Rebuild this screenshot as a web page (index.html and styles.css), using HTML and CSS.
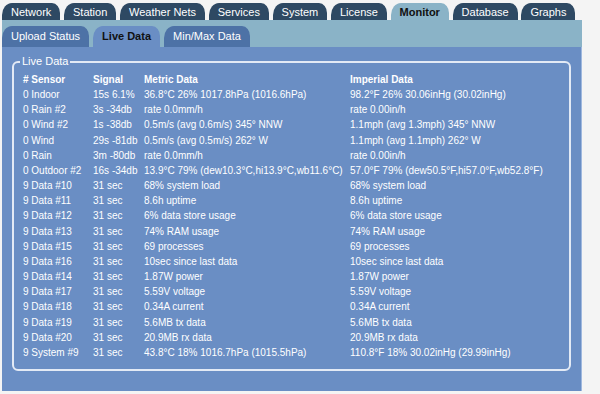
FILE: index.html
```html
<!DOCTYPE html>
<html lang="en">
<head>
  <meta charset="UTF-8">
  <title>Monitor - Live Data</title>
  <link rel="stylesheet" href="styles.css">
</head>
<body>

  <div class="page">
    <!-- Main navigation -->
    <ul class="tabs main-tabs">
      <li>Network</li>
      <li>Station</li>
      <li>Weather Nets</li>
      <li>Services</li>
      <li>System</li>
      <li>License</li>
      <li class="active">Monitor</li>
      <li>Database</li>
      <li>Graphs</li>
    </ul>

    <!-- Sub navigation -->
    <div class="subbar">
      <ul class="tabs sub-tabs">
        <li>Upload Status</li>
        <li class="active">Live Data</li>
        <li>Min/Max Data</li>
      </ul>
    </div>

    <div class="panel">
      <fieldset class="live">
        <legend>Live Data</legend>
        <table class="sensors">
          <colgroup>
            <col class="c-sensor">
            <col class="c-signal">
            <col class="c-metric">
            <col>
          </colgroup>
          <thead>
            <tr><th># Sensor</th><th>Signal</th><th>Metric Data</th><th>Imperial Data</th></tr>
          </thead>
          <tbody>
            <tr><td>0 Indoor</td><td>15s 6.1%</td><td>36.8°C 26% 1017.8hPa (1016.6hPa)</td><td>98.2°F 26% 30.06inHg (30.02inHg)</td></tr>
            <tr><td>0 Rain #2</td><td>3s -34db</td><td>rate 0.0mm/h</td><td>rate 0.00in/h</td></tr>
            <tr><td>0 Wind #2</td><td>1s -38db</td><td>0.5m/s (avg 0.6m/s) 345° NNW</td><td>1.1mph (avg 1.3mph) 345° NNW</td></tr>
            <tr><td>0 Wind</td><td>29s -81db</td><td>0.5m/s (avg 0.5m/s) 262° W</td><td>1.1mph (avg 1.1mph) 262° W</td></tr>
            <tr><td>0 Rain</td><td>3m -80db</td><td>rate 0.0mm/h</td><td>rate 0.00in/h</td></tr>
            <tr><td>0 Outdoor #2</td><td>16s -34db</td><td>13.9°C 79% (dew10.3°C,hi13.9°C,wb11.6°C)</td><td>57.0°F 79% (dew50.5°F,hi57.0°F,wb52.8°F)</td></tr>
            <tr><td>9 Data #10</td><td>31 sec</td><td>68% system load</td><td>68% system load</td></tr>
            <tr><td>9 Data #11</td><td>31 sec</td><td>8.6h uptime</td><td>8.6h uptime</td></tr>
            <tr><td>9 Data #12</td><td>31 sec</td><td>6% data store usage</td><td>6% data store usage</td></tr>
            <tr><td>9 Data #13</td><td>31 sec</td><td>74% RAM usage</td><td>74% RAM usage</td></tr>
            <tr><td>9 Data #15</td><td>31 sec</td><td>69 processes</td><td>69 processes</td></tr>
            <tr><td>9 Data #16</td><td>31 sec</td><td>10sec since last data</td><td>10sec since last data</td></tr>
            <tr><td>9 Data #14</td><td>31 sec</td><td>1.87W power</td><td>1.87W power</td></tr>
            <tr><td>9 Data #17</td><td>31 sec</td><td>5.59V voltage</td><td>5.59V voltage</td></tr>
            <tr><td>9 Data #18</td><td>31 sec</td><td>0.34A current</td><td>0.34A current</td></tr>
            <tr><td>9 Data #19</td><td>31 sec</td><td>5.6MB tx data</td><td>5.6MB tx data</td></tr>
            <tr><td>9 Data #20</td><td>31 sec</td><td>20.9MB rx data</td><td>20.9MB rx data</td></tr>
            <tr><td>9 System #9</td><td>31 sec</td><td>43.8°C 18% 1016.7hPa (1015.5hPa)</td><td>110.8°F 18% 30.02inHg (29.99inHg)</td></tr>
          </tbody>
        </table>
      </fieldset>
    </div>
  </div>

</body>
</html>
```

FILE: styles.css
```css
body {
  font-family: "Liberation Sans", Arial, sans-serif;
  background-color: #f4f4f4;
  margin: 0;
}
.page {
  width: 580px;
  padding: 3px 0 0 2px;
}
.tabs {
  display: flex;
  gap: 3.7px;
  list-style: none;
  margin: 0;
  padding: 0;
}
.tabs li {
  font-size: 11px;
  padding: 0 9px;
  white-space: nowrap;
  border-radius: 10px 8px 0 0 / 12px 10px 0 0;
}
.main-tabs li {
  height: 17px;
  line-height: 18px;
  background-color: #2e4963;
  color: #fff;
}
.main-tabs li.active {
  background-color: #8ab3c7;
  color: #111;
  font-weight: bold;
}
.subbar {
  background-color: #8ab3c7;
  padding-top: 6px;
}
.sub-tabs {
  gap: 4px;
}
.sub-tabs li {
  height: 21px;
  line-height: 20px;
  background-color: #4d72a6;
  color: #fff;
}
.sub-tabs li.active {
  background-color: #6a8ec4;
  color: #111;
  font-weight: bold;
}
.panel {
  background-color: #6a8ec4;
  border-right: 1px solid #9fb8de;
  padding: 8px 10px 20px 10px;
}
.live {
  margin: 0;
  padding: 4px 9px 9px 9px;
  border: 2px solid #e3eaf5;
  border-radius: 6px;
  color: #fff;
}
.live legend {
  font-size: 11px;
  line-height: 13px;
  padding: 0 2px;
  margin-left: -3px;
}
.sensors {
  border-collapse: collapse;
  font-size: 10px;
  color: #fff;
}
.sensors th,
.sensors td {
  padding: 0;
  line-height: 15.15px;
  text-align: left;
  white-space: nowrap;
}
.c-sensor { width: 70px; }
.c-signal { width: 51px; }
.c-metric { width: 206px; }
```
